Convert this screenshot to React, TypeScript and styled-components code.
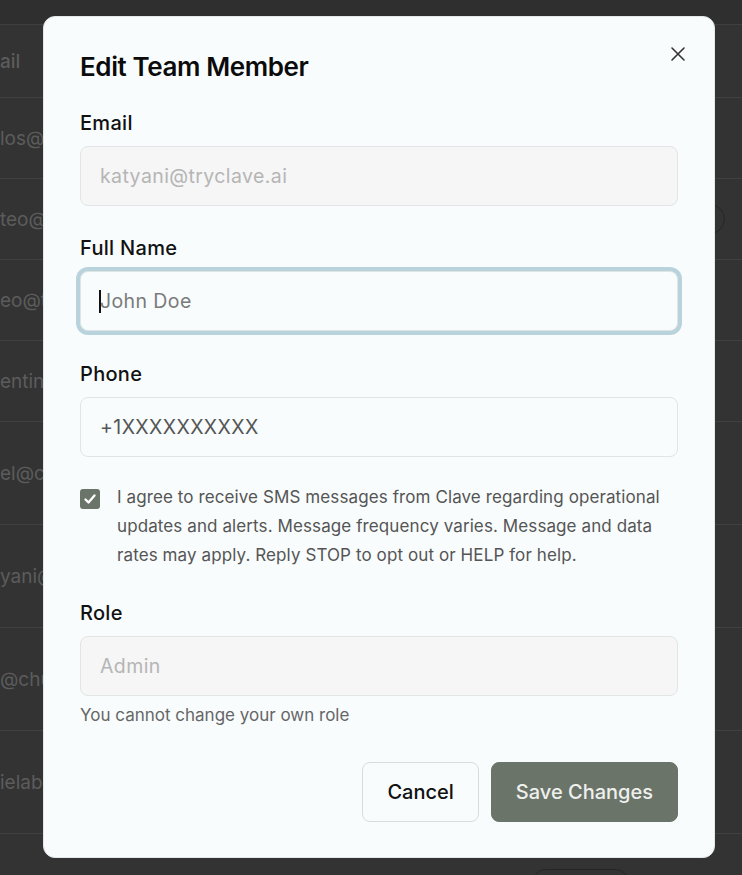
import React from "react";
import styled, { createGlobalStyle } from "styled-components";

const GlobalStyle = createGlobalStyle`
    html, body {
        margin: 0;
        padding: 0;
        background: #333333;
    }

    body {
        font-family: Inter, "Noto Sans", "Liberation Sans", sans-serif;
    }

    * {
        box-sizing: border-box;
    }
`;

const Page = styled.div`
    min-height: 875px;
    overflow: hidden;
    background: #333333;
`;

const TopStrip = styled.div`
    height: 25px;
    background: #2f2f2f;
    border-bottom: 1px solid #3f3f3f;
`;

const TableRow = styled.div<{ $height: number; $header?: boolean }>`
    height: ${(props): string => `${props.$height}px`};
    display: flex;
    align-items: center;
    justify-content: space-between;
    padding-right: 17px;
    border-bottom: 1px solid #404040;
    color: #5c5c5c;
    font-size: 19px;
    font-weight: ${(props): number => (props.$header ? 500 : 400)};
    white-space: nowrap;
`;

const Pill = styled.span`
    width: 80px;
    height: 30px;
    border: 1px solid #262626;
    border-radius: 15px;
`;

const LastRow = styled.div`
    padding: 35px 0 0 533px;
`;

const BottomButton = styled.span`
    display: block;
    width: 95px;
    height: 30px;
    border: 1px solid #262626;
    border-radius: 12px;
`;

const Dialog = styled.div`
    position: fixed;
    top: 16px;
    left: 43px;
    width: 672px;
    height: 842px;
    display: flex;
    flex-direction: column;
    padding: 32px 36px 36px 36px;
    background: #f8fcfd;
    border: 1px solid #e2e7e9;
    border-radius: 12px;
`;

const Title = styled.h2`
    margin: 0 0 27px 0;
    font-size: 26px;
    line-height: 36px;
    font-weight: 600;
    letter-spacing: -0.4px;
    color: #0b0b0b;
`;

const CloseButton = styled.button`
    position: absolute;
    top: 28px;
    right: 27px;
    width: 18px;
    height: 18px;
    padding: 0;
    border: none;
    background: none;
    color: #333;
    display: flex;
    align-items: center;
    justify-content: center;
`;

const Field = styled.div<{ $gap?: number }>`
    display: flex;
    flex-direction: column;
    margin-top: ${(props): string => `${props.$gap ?? 0}px`};
`;

const Label = styled.label`
    font-size: 20px;
    line-height: 22px;
    font-weight: 500;
    letter-spacing: 0.3px;
    color: #111;
    margin-bottom: 12px;
`;

const InputWrap = styled.div`
    position: relative;
`;

const TextInput = styled.input<{ $focused?: boolean }>`
    width: 100%;
    height: 60px;
    padding: 0 19px;
    font-family: inherit;
    font-size: 19.5px;
    letter-spacing: 0.4px;
    color: #555;
    background: ${(props): string => (props.disabled ? "#f5f6f5" : "#f8fcfd")};
    border: 1px solid ${(props): string => (props.$focused ? "#dfe4e6" : "#e2e5e6")};
    border-radius: 8px;
    outline: none;
    caret-color: transparent;
    box-shadow: ${(props): string => (props.$focused ? "0 0 0 4px #b9d3dc" : "none")};

    &::placeholder {
        color: ${(props): string => (props.disabled ? "#b5b5b5" : "#7a7a7a")};
    }

    &:disabled {
        color: #b5b5b5;
    }
`;

const Caret = styled.span`
    position: absolute;
    left: 19px;
    top: 19px;
    width: 2px;
    height: 23px;
    background: #111;
`;

const Consent = styled.div`
    display: flex;
    gap: 17px;
    margin-top: 26px;
`;

const CheckBox = styled.span`
    flex: 0 0 20px;
    width: 20px;
    height: 20px;
    margin-top: 6px;
    border-radius: 3px;
    background: #6b7469;
    display: flex;
    align-items: center;
    justify-content: center;
`;

const ConsentText = styled.p`
    margin: 0;
    font-size: 17px;
    line-height: 29px;
    letter-spacing: 0.1px;
    color: #555;
`;

const Helper = styled.p`
    margin: 8px 0 0 0;
    font-size: 17px;
    line-height: 22px;
    color: #666;
`;

const Actions = styled.div`
    display: flex;
    justify-content: flex-end;
    gap: 12px;
    margin-top: 36px;
`;

const ActionButton = styled.button<{ $primary?: boolean }>`
    height: 60px;
    padding: 0 24px;
    font-family: inherit;
    font-size: 20px;
    font-weight: 500;
    letter-spacing: 0;
    border-radius: 8px;
    border: 1px solid ${(props): string => (props.$primary ? "#6b7469" : "#d9dcdc")};
    background: ${(props): string => (props.$primary ? "#6b7469" : "#f8fcfd")};
    color: ${(props): string => (props.$primary ? "#eef0ee" : "#111")};
`;

const rows = [
    { text: "los@chuckles.com", height: 81 },
    { text: "teo@chuckles.com", height: 81, pill: true },
    { text: "eo@tryclave.ai", height: 81 },
    { text: "entina@chuckles.com", height: 81 },
    { text: "el@chuckles.com", height: 103 },
    { text: "yani@tryclave.ai", height: 103 },
    { text: "@chuckles.com", height: 103 },
    { text: "ielabs@chuckles.com", height: 103 }
];

const App: React.FC = (): React.ReactElement => {
    return (
        <Page>
            <GlobalStyle />
            <TopStrip />
            <TableRow $height={73} $header>
                ail
            </TableRow>
            {rows.map((row) => (
                <TableRow key={row.text} $height={row.height}>
                    {row.text}
                    {row.pill && <Pill />}
                </TableRow>
            ))}
            <LastRow>
                <BottomButton />
            </LastRow>

            <Dialog role="dialog">
                <Title>Edit Team Member</Title>
                <CloseButton aria-label="Close">
                    <svg width="16" height="16" viewBox="0 0 16 16" fill="none">
                        <path d="M2 2L14 14M14 2L2 14" stroke="#333" strokeWidth="1.6" strokeLinecap="round" />
                    </svg>
                </CloseButton>

                <Field>
                    <Label>Email</Label>
                    <TextInput disabled placeholder="katyani@tryclave.ai" />
                </Field>

                <Field $gap={31}>
                    <Label>Full Name</Label>
                    <InputWrap>
                        <TextInput $focused placeholder="John Doe" />
                        <Caret />
                    </InputWrap>
                </Field>

                <Field $gap={32}>
                    <Label>Phone</Label>
                    <TextInput defaultValue="+1XXXXXXXXXX" />
                </Field>

                <Consent>
                    <CheckBox>
                        <svg width="14" height="14" viewBox="0 0 14 14" fill="none">
                            <path d="M2.5 7.5L5.5 10.5L11.5 3.5" stroke="#fff" strokeWidth="2.4" strokeLinecap="round" strokeLinejoin="round" />
                        </svg>
                    </CheckBox>
                    <ConsentText>
                        I agree to receive SMS messages from Clave regarding operational updates and alerts. Message frequency varies. Message and data rates may apply. Reply STOP to opt out or HELP for help.
                    </ConsentText>
                </Consent>

                <Field $gap={32}>
                    <Label>Role</Label>
                    <TextInput disabled placeholder="Admin" />
                    <Helper>You cannot change your own role</Helper>
                </Field>

                <Actions>
                    <ActionButton>Cancel</ActionButton>
                    <ActionButton $primary>Save Changes</ActionButton>
                </Actions>
            </Dialog>
        </Page>
    );
};

export default App;
